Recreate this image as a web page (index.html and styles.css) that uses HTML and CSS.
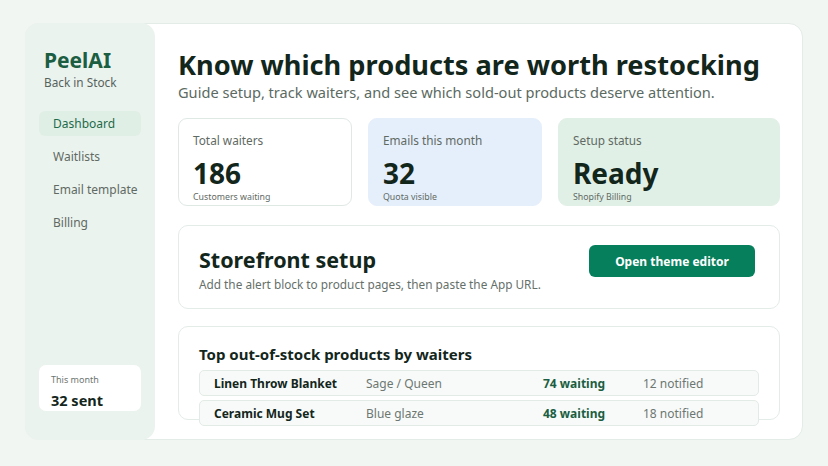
FILE: index.html
```html
<!DOCTYPE html>
<html lang="en">
<head>
    <meta charset="UTF-8">
    <meta name="viewport" content="width=device-width, initial-scale=1.0">
    <title>PeelAI - Back in Stock</title>
    <link rel="stylesheet" href="styles.css">
</head>
<body>
    <div class="shell">
        <!-- Sidebar -->
        <aside class="sidebar">
            <div class="brand">
                <div class="brand-name">PeelAI</div>
                <div class="brand-sub">Back in Stock</div>
            </div>
            <nav class="nav">
                <a class="nav-item active">Dashboard</a>
                <a class="nav-item">Waitlists</a>
                <a class="nav-item">Email template</a>
                <a class="nav-item">Billing</a>
            </nav>
            <div class="usage">
                <div class="usage-label">This month</div>
                <div class="usage-value">32 sent</div>
            </div>
        </aside>

        <!-- Main content -->
        <main class="main">
            <h1>Know which products are worth restocking</h1>
            <p class="lead">Guide setup, track waiters, and see which sold-out products deserve attention.</p>

            <div class="stats">
                <div class="stat">
                    <div class="stat-label">Total waiters</div>
                    <div class="stat-value">186</div>
                    <div class="stat-note">Customers waiting</div>
                </div>
                <div class="stat stat-blue">
                    <div class="stat-label">Emails this month</div>
                    <div class="stat-value">32</div>
                    <div class="stat-note">Quota visible</div>
                </div>
                <div class="stat stat-green">
                    <div class="stat-label">Setup status</div>
                    <div class="stat-value">Ready</div>
                    <div class="stat-note">Shopify Billing</div>
                </div>
            </div>

            <section class="panel setup">
                <div>
                    <h2>Storefront setup</h2>
                    <p>Add the alert block to product pages, then paste the App URL.</p>
                </div>
                <button class="btn">Open theme editor</button>
            </section>

            <section class="panel products">
                <h3>Top out-of-stock products by waiters</h3>
                <div class="row">
                    <span class="p-name">Linen Throw Blanket</span>
                    <span class="p-variant">Sage / Queen</span>
                    <span class="p-wait">74 waiting</span>
                    <span class="p-notified">12 notified</span>
                </div>
                <div class="row">
                    <span class="p-name">Ceramic Mug Set</span>
                    <span class="p-variant">Blue glaze</span>
                    <span class="p-wait">48 waiting</span>
                    <span class="p-notified">18 notified</span>
                </div>
            </section>
        </main>
    </div>
</body>
</html>
```

FILE: styles.css
```css
/* PeelAI dashboard */
body {
    font-family: 'Noto Sans', 'Open Sans', sans-serif;
    background-color: #f1f6f3;
    color: #13261c;
    margin: 0;
    padding: 23px 25px;
}

.shell {
    display: flex;
    height: 417px;
    background-color: #ffffff;
    border: 1px solid #e3ece7;
    border-radius: 14px;
    box-sizing: border-box;
}

.sidebar {
    width: 130px;
    flex-shrink: 0;
    margin: -1px 0 -1px -1px;
    background-color: #ebf3ee;
    border-radius: 14px;
    padding: 23px 14px 29px 14px;
    display: flex;
    flex-direction: column;
    box-sizing: border-box;
}

.brand {
    padding-left: 5px;
}

.brand-name {
    font-size: 21px;
    font-weight: 700;
    color: #1b5e42;
    line-height: 29px;
}

.brand-sub {
    font-size: 11.8px;
    color: #56625c;
    line-height: 15px;
}

.nav {
    margin-top: 21px;
    display: flex;
    flex-direction: column;
    gap: 8px;
}

.nav-item {
    display: block;
    padding: 0 14px;
    height: 25px;
    line-height: 25px;
    font-size: 12px;
    color: #5f6a64;
    border-radius: 6px;
    white-space: nowrap;
}

.nav-item.active {
    background-color: #e0efe6;
    color: #1e6a4a;
}

.usage {
    margin-top: auto;
    height: 46px;
    box-sizing: border-box;
    background-color: #ffffff;
    border-radius: 7px;
    padding: 8px 12px 0;
}

.usage-label {
    font-size: 9px;
    color: #6d7772;
    line-height: 14px;
}

.usage-value {
    margin-top: 3px;
    font-size: 14.5px;
    font-weight: 700;
    color: #13261c;
    line-height: 20px;
}

.main {
    flex: 1;
    padding: 24px 22px 0 23px;
    min-width: 0;
}

h1 {
    margin: 0;
    font-size: 27.2px;
    line-height: 34px;
    font-weight: 700;
    color: #13261c;
    white-space: nowrap;
}

.lead {
    margin: 0 0 16px;
    font-size: 14.6px;
    line-height: 20px;
    color: #5b6a62;
    white-space: nowrap;
}

.stats {
    display: grid;
    grid-template-columns: 174px 174px 1fr;
    gap: 16px;
}

.stat {
    height: 88px;
    box-sizing: border-box;
    border: 1px solid #dfe9e4;
    border-radius: 9px;
    padding: 12px 14px 0;
    background-color: #ffffff;
}

.stat-blue {
    background-color: #e5effb;
    border-color: #e5effb;
}

.stat-green {
    background-color: #e1f0e6;
    border-color: #e1f0e6;
}

.stat-label {
    font-size: 11.8px;
    color: #5f6a64;
    line-height: 18px;
}

.stat-value {
    font-size: 28px;
    font-weight: 700;
    line-height: 38px;
    margin-top: 5px;
    color: #13261c;
}

.stat-note {
    font-size: 8.8px;
    color: #5f6a64;
    line-height: 10px;
}

.panel {
    background-color: #ffffff;
    border: 1px solid #e3ece7;
    border-radius: 10px;
    box-sizing: border-box;
}

.setup {
    margin-top: 19px;
    height: 84px;
    display: flex;
    align-items: flex-start;
    justify-content: space-between;
    padding: 19px 24px 0 20px;
}

.setup h2 {
    margin: 0;
    font-size: 21.5px;
    line-height: 30px;
    font-weight: 700;
}

.setup p {
    margin: 0;
    font-size: 11.8px;
    color: #65706a;
    line-height: 18px;
}

.btn {
    width: 166px;
    height: 32px;
    background-color: #067f5c;
    color: #ffffff;
    border: none;
    border-radius: 6px;
    font-family: inherit;
    font-size: 12px;
    font-weight: 700;
    cursor: pointer;
}

.products {
    margin-top: 17px;
    height: 94px;
    padding: 16px 20px 0 20px;
}

.products h3 {
    margin: 0 0 5px;
    font-size: 15px;
    line-height: 22px;
    font-weight: 700;
}

.row {
    display: grid;
    grid-template-columns: 152px 177px 100px 1fr;
    align-items: center;
    height: 26px;
    box-sizing: border-box;
    padding: 0 14px;
    margin-bottom: 4px;
    background-color: #f8faf9;
    border: 1px solid #e3ebe6;
    border-radius: 5px;
    font-size: 12px;
}

.p-name {
    font-weight: 700;
    color: #13261c;
}

.p-variant,
.p-notified {
    color: #6d7772;
}

.p-wait {
    font-weight: 700;
    color: #1b5e42;
}
```
